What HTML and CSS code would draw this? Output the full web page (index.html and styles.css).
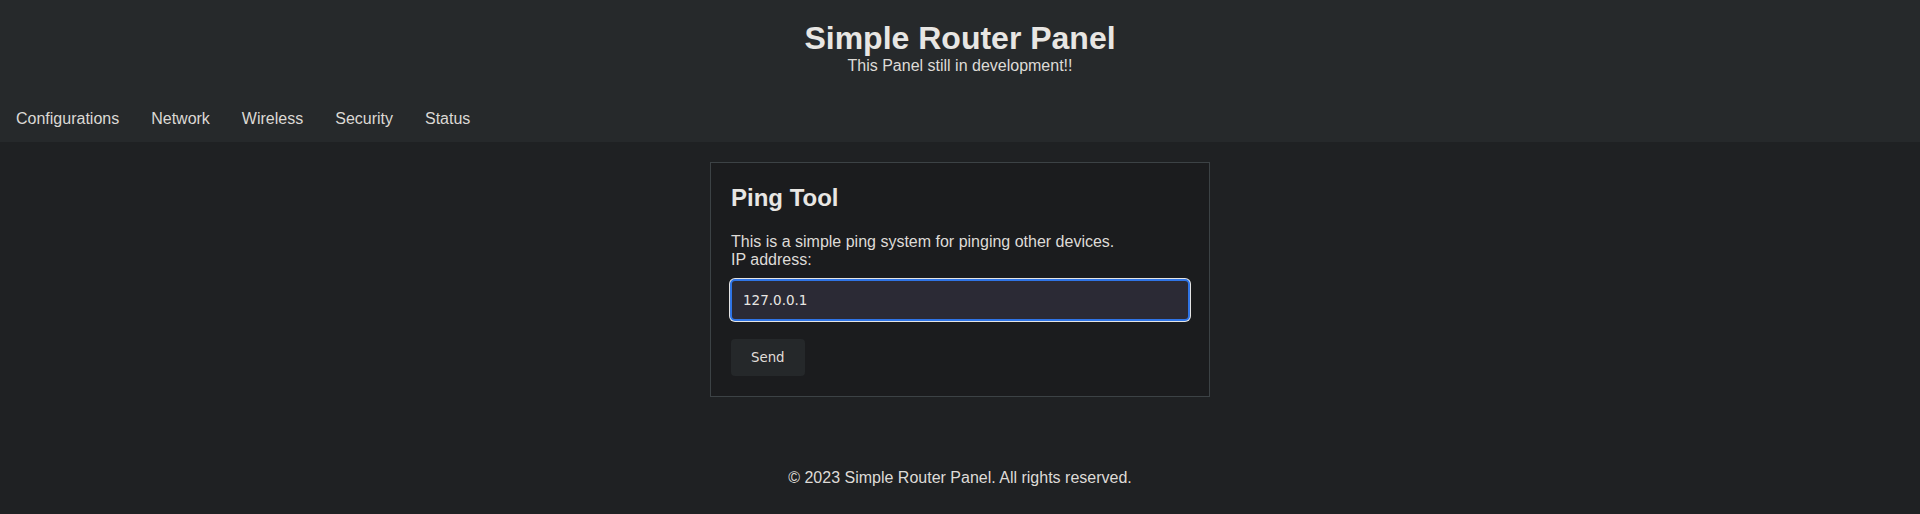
FILE: index.html
```html
<!DOCTYPE html>
<html lang="en">
<head>
<meta charset="utf-8">
<title>Simple Router Panel</title>
<link rel="stylesheet" href="styles.css">
</head>
<body>
<header class="site-header">
  <div class="brand">
    <h1 class="brand-title">Simple Router Panel</h1>
    <p class="brand-sub">This Panel still in development!!</p>
  </div>
  <nav class="nav">
    <a class="nav-link" href="#">Configurations</a>
    <a class="nav-link" href="#">Network</a>
    <a class="nav-link" href="#">Wireless</a>
    <a class="nav-link" href="#">Security</a>
    <a class="nav-link" href="#">Status</a>
  </nav>
</header>
<main class="main">
  <section class="card">
    <h2 class="card-title">Ping Tool</h2>
    <p class="card-text">This is a simple ping system for pinging other devices.<br>IP address:</p>
    <form class="ping-form" onsubmit="return false">
      <input class="ip-input" type="text" value="127.0.0.1" autofocus>
      <button class="send-btn" type="submit">Send</button>
    </form>
  </section>
</main>
<footer class="site-footer">
  <p class="footer-text">© 2023 Simple Router Panel. All rights reserved.</p>
</footer>
</body>
</html>
```
FILE: styles.css
```css
html, body {
  margin: 0;
  padding: 0;
}
body {
  background: #1f2123;
  color: #e8e6e3;
  font-family: "Liberation Sans", Arial, sans-serif;
  font-size: 16px;
}
.site-header {
  background: #26292b;
}
.brand {
  text-align: center;
  padding-top: 20px;
}
.brand-title {
  margin: 0;
  font-size: 32px;
  font-weight: bold;
  color: #e8e6e3;
}
.brand-sub {
  margin: 0;
  font-size: 16px;
  color: #dedbd7;
}
.nav {
  display: flex;
  padding-top: 21px;
}
.nav-link {
  display: block;
  padding: 14px 16px;
  color: #dcd9d5;
  text-decoration: none;
}
.main {
  padding-top: 20px;
}
.card {
  width: 500px;
  box-sizing: border-box;
  margin: 0 auto;
  background: #1b1c1e;
  border: 1px solid #3c4245;
  padding: 21px 20px 20px;
}
.card-title {
  margin: 0 0 21px;
  font-size: 24px;
  font-weight: bold;
  color: #e8e6e3;
}
.card-text {
  margin: 0;
  color: #dedbd7;
  line-height: 18px;
}
.ping-form {
  display: flex;
  flex-direction: column;
  align-items: flex-start;
}
.ip-input {
  box-sizing: border-box;
  width: calc(100% + 2px);
  margin: 10px 0 0 -1px;
  height: 42px;
  padding: 0 11px;
  border: 2px solid #2f74e6;
  border-radius: 5px;
  box-shadow: 0 0 0 1px #e4e4e4;
  background: #2b2a35;
  color: #e8e6e3;
  font-family: "DejaVu Sans", sans-serif;
  font-size: 13.5px;
  caret-color: #e8e6e3;
}
.ip-input:focus {
  outline: none;
}
.send-btn {
  margin-top: 18px;
  height: 37px;
  padding: 0 20px;
  border: 0;
  border-radius: 4px;
  background: #25282a;
  color: #e0ddd9;
  font-family: "DejaVu Sans", sans-serif;
  font-size: 13.33px;
}
.site-footer {
  padding: 72px 0 18px;
  text-align: center;
}
.footer-text {
  margin: 0;
  color: #dedbd7;
}
```
